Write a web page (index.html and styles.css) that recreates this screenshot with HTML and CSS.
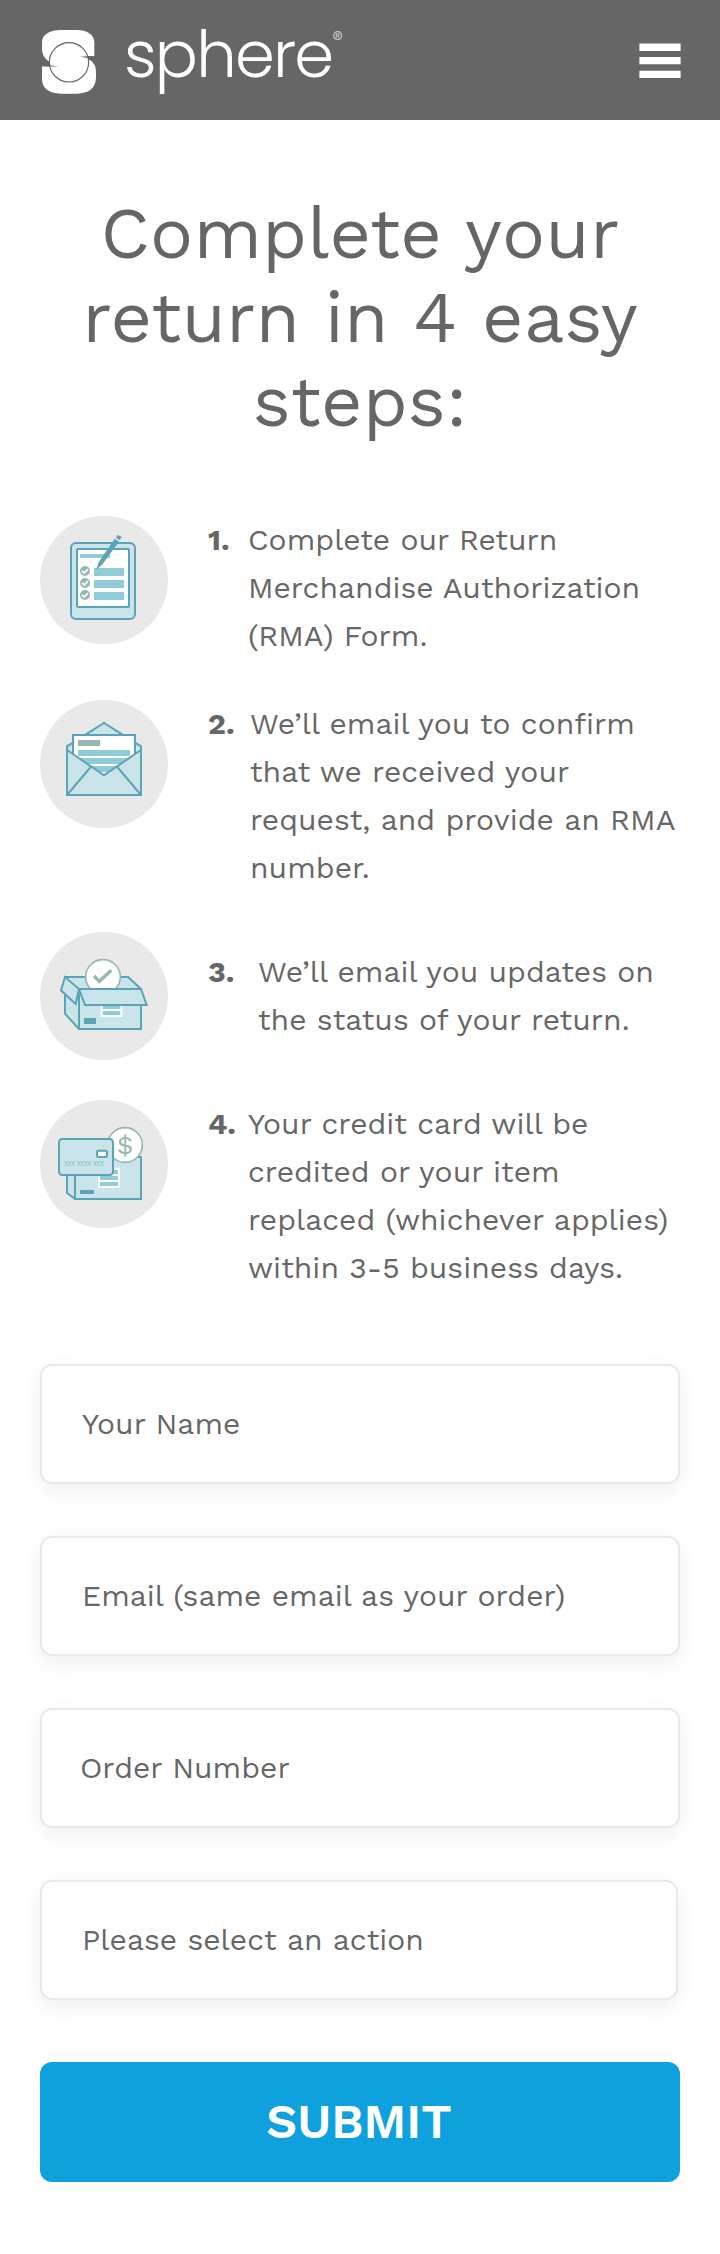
FILE: index.html
```html
<!DOCTYPE html>
<html lang="en">
<head>
<meta charset="utf-8">
<title>Sphere returns</title>
<link rel="stylesheet" href="styles.css">
</head>
<body>
<header class="header">
  <a class="brand">
    <svg class="mark" viewBox="30 24 174 202">
      <path fill="#fff" d="M58 125C45 118 36 105 36 85V66C36 42 62 30 92 30H140C170 30 193 44 193 66V109L150 107L117 127Z"/>
      <path fill="#fff" d="M36 139L85 142L117 127L176 118C190 125 198 138 198 155V172C198 206 174 221 142 221H92C60 221 36 206 36 178Z"/>
      <circle cx="117" cy="127" r="59" fill="#fff" stroke="#666" stroke-width="3.5"/>
      <path fill="#666" d="M194 109H174L150 110L172 114L180 120L190 122ZM36 139H60L86 141L62 136L54 129L42 128Z"/>
    </svg>
    <span class="wordmark">sphere</span><span class="reg">®</span>
  </a>
  <svg class="menu" viewBox="0 0 44 40">
    <path fill="#fff" d="M1.4 3.5H42.6V10.9H1.4ZM1.4 16.9H42.6V24.3H1.4ZM1.4 30.8H42.6V38H1.4Z"/>
  </svg>
</header>
<main class="main">
  <h1 class="title">Complete your<br>return in 4 easy<br>steps:</h1>
  <section class="steps">
    <div class="step">
      <svg class="icon" viewBox="30 33 384 384">
        <circle class="disc" cx="222" cy="225" r="192"/>
        <rect class="light line" x="123" y="114" width="192" height="228" rx="15"/>
        <rect class="paper line" x="141" y="132" width="156" height="174" rx="3"/>
        <path class="mid" d="M150 147H240V159H150ZM192 189H282V213H192ZM192 225H282V249H192ZM192 261H282V285H192Z"/>
        <circle class="sage" cx="165" cy="198" r="15"/><circle class="sage" cx="165" cy="234" r="15"/><circle class="sage" cx="165" cy="270" r="15"/>
        <path class="tick" d="M156 198L163 204L174 192M156 234L163 240L174 228M156 270L163 276L174 264"/>
        <path class="dark" d="M198 195L206 172L254 101L267 110L218 177ZM258 98L263 90L275 95L269 106Z"/>
      </svg>
      <b class="num">1.</b>
      <p class="text">Complete our Return<br>Merchandise Authorization<br>(RMA) Form.</p>
    </div>
    <div class="step step-2">
      <svg class="icon" viewBox="30 30 384 384">
        <circle class="disc" cx="222" cy="222" r="192"/>
        <path class="light line" d="M111 315V169L222 99L333 169V315Z"/>
        <path class="paper line" d="M129 200V135H315V200L222 256Z"/>
        <path class="sage" d="M144 150H210V168H144Z"/>
        <path class="mid" d="M144 180H300V198H144ZM148 204H294L270 222H174ZM182 228H262L240 246H204Z"/>
        <path class="light line" d="M111 180L222 256L333 180V315H111Z"/>
        <path class="line open" d="M182 231L111 315M262 231L333 315"/>
      </svg>
      <b class="num">2.</b>
      <p class="text">We’ll email you to confirm<br>that we received your<br>request, and provide an RMA<br>number.</p>
    </div>
    <div class="step step-3">
      <svg class="icon" viewBox="30 36 384 384">
        <circle class="disc" cx="222" cy="228" r="192"/>
        <path class="light line" d="M105 171H294L333 207V327H147L105 281Z"/>
        <circle class="coin" cx="219" cy="171" r="52"/>
        <path class="check" d="M192 168L208 184L244 151"/>
        <path class="light line" d="M147 207H333V327H147Z"/>
        <path class="mid" d="M213 240H276V290H213Z"/>
        <path class="slot" d="M215 240V288H274V240M213 270H276"/>
        <path class="light line" d="M147 207H333L350 255H165Z"/>
        <path class="light line" d="M105 171L147 207L137 252L93 211Z"/>
        <path class="dark" d="M162 294H198V312H162Z"/>
      </svg>
      <b class="num">3.</b>
      <p class="text">We’ll email you updates on<br>the status of your return.</p>
    </div>
    <div class="step">
      <svg class="icon" viewBox="30 30 384 384">
        <circle class="disc" cx="222" cy="222" r="192"/>
        <path class="light line" d="M111 240V309L135 327H333V201H135M135 240V327"/>
        <path class="mid" d="M207 236H268V290H207Z"/>
        <path class="slot" d="M207 236H267V291H207ZM207 255H267M207 273H267"/>
        <circle class="coin" cx="285" cy="165" r="52"/>
        <text class="dollar" x="285" y="192">$</text>
        <rect class="light line" x="87" y="147" width="162" height="108" rx="10"/>
        <rect class="paper line" x="201" y="182" width="30" height="19" rx="4"/>
        <text class="digits" x="102" y="228" textLength="120">XXX XXXX XXX</text>
        <path class="dark" d="M150 300H192V312H150Z"/>
      </svg>
      <b class="num">4.</b>
      <p class="text">Your credit card will be<br>credited or your item<br>replaced (whichever applies)<br>within 3-5 business days.</p>
    </div>
  </section>
  <form class="form">
    <div class="field">Your Name</div>
    <div class="field">Email (same email as your order)</div>
    <div class="field field-order">Order Number</div>
    <div class="field field-action">Please select an action</div>
    <button class="submit" type="button">SUBMIT</button>
  </form>
</main>
</body>
</html>
```
FILE: styles.css
```css
* { box-sizing: border-box; }
body {
  margin: 0;
  background: #fff;
  color: #666;
  font-family: "Work Sans", Inter, sans-serif;
  font-size: 30px;
  line-height: 48px;
  letter-spacing: .04px;
}
.header {
  height: 120px;
  padding: 0 38px 0 40px;
  background: #666;
  display: flex;
  align-items: flex-start;
  justify-content: space-between;
}
.brand { display: flex; color: #fff; }
.mark { width: 58px; height: 67.3px; margin-top: 28px; }
.wordmark {
  margin: 10px 0 0 26px;
  font: 300 64px/90px Poppins, Inter, sans-serif;
  letter-spacing: -1.8px;
}
.reg { margin-top: 25px; font-size: 13px; line-height: 22px; opacity: .7; }
.menu { width: 44px; height: 40px; margin-top: 40px; }
.main { padding: 71px 40px 72px; }
.title {
  margin: 0 0 73px;
  text-align: center;
  font-size: 72px;
  font-weight: 400;
  line-height: 84px;
  letter-spacing: .1px;
}
.steps { display: flex; flex-direction: column; gap: 40px; }
.step { display: flex; align-items: flex-start; }
.step-3 .num, .step-3 .text { margin-top: 16px; }
.icon { flex: none; width: 128px; height: 128px; margin-right: 40px; }
.num { flex: none; width: 40px; font-weight: 700; }
.step-2 .num { width: 42px; }
.step-3 .num { width: 50px; }
.text { margin: 0; white-space: nowrap; }

.disc { fill: #e9e9e9; }
.light { fill: #c9e5eb; }
.mid { fill: #8fcbd8; }
.dark { fill: #5ba4b6; }
.sage { fill: #96b8b0; }
.paper { fill: #fff; }
.line { stroke: #5ba4b6; stroke-width: 6; }
.open { fill: none; }
.tick { fill: none; stroke: #fff; stroke-width: 5; }
.coin { fill: #fff; stroke: #96b8b0; stroke-width: 5; }
.check { fill: none; stroke: #96b8b0; stroke-width: 10; }
.slot { fill: none; stroke: #fff; stroke-width: 6; }
.dollar { fill: #96b8b0; font-size: 78px; text-anchor: middle; }
.digits { fill: #5ba4b6; font-size: 20px; font-weight: 300; }

.form { margin-top: 72px; display: flex; flex-direction: column; }
.field {
  height: 120px;
  margin-bottom: 52px;
  padding: 0 40px;
  display: flex;
  align-items: center;
  border: 2px solid #e9e9e9;
  border-radius: 12px;
  background: #fff;
  box-shadow: 0 6px 20px rgba(0, 0, 0, .07);
}
.field-order { padding-left: 38px; }
.field-action { width: 638px; margin-bottom: 62px; }
.submit {
  height: 120px;
  padding: 0 8px 0 6px;
  border: 0;
  border-radius: 12px;
  background: #0fa1dd;
  color: #fff;
  font: 600 48px/56px "Work Sans", Inter, sans-serif;
}
```
